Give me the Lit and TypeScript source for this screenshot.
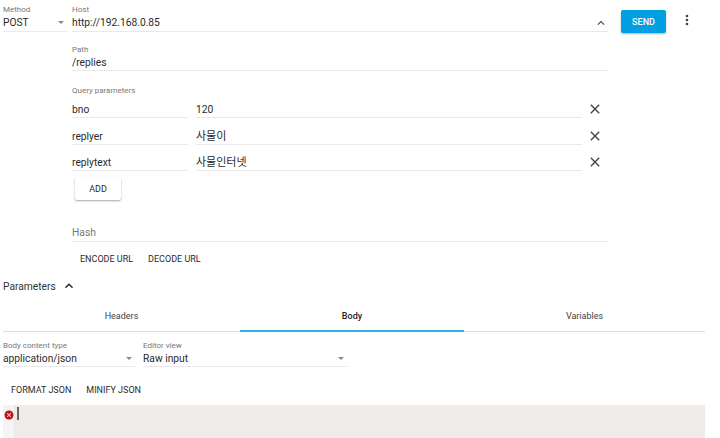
import { LitElement, html, css, svg } from "lit";
import { customElement } from "lit/decorators.js";

const chevUp = svg`<path d="M7.4 15.4 12 10.8l4.6 4.6L18 14l-6-6-6 6z"/>`;
const closeX = svg`<path d="M19 6.41 17.59 5 12 10.59 6.41 5 5 6.41 10.59 12 5 17.59 6.41 19 12 13.41 17.59 19 19 17.59 13.41 12z"/>`;
const dots = svg`<path d="M12 8a2 2 0 1 0 0-4 2 2 0 0 0 0 4zm0 2a2 2 0 1 0 0 4 2 2 0 0 0 0-4zm0 6a2 2 0 1 0 0 4 2 2 0 0 0 0-4z"/>`;

@customElement("app-root")
export class AppRoot extends LitElement {
  static styles = css`
    :host {
      display: block;
      width: 720px;
      height: 438px;
      overflow: hidden;
      background: #fff;
      color: #2b2b2b;
      font-family: Roboto, "Noto Sans CJK KR", sans-serif;
      font-size: 10.25px;
    }
    .top { display: flex; align-items: flex-start; padding-left: 3px; height: 35px; }
    .field { display: flex; flex-direction: column; border-bottom: 1px solid #e9e9e9; box-sizing: border-box; }
    .lab { font-size: 8px; line-height: 11px; color: #777; }
    .val { font-size: 10.25px; line-height: 15px; color: #2b2b2b; display: flex; align-items: center; justify-content: space-between; }
    .method { width: 64px; height: 32px; padding-top: 4px; margin-right: 5px; }
    .host { width: 536px; height: 32px; padding-top: 4px; margin-right: 13px; }
    .arrow { width: 0; height: 0; border-left: 3.5px solid transparent; border-right: 3.5px solid transparent; border-top: 3.5px solid #8a8a8a; margin-right: 3px; }
    .icon { fill: #37474f; display: block; flex: none; }
    .send {
      width: 45px; height: 23px; margin-top: 10px; background: #00a0e3; color: #fff; font-weight: 500;
      font-size: 9px; display: flex; align-items: center; justify-content: center; border-radius: 2px;
      box-shadow: 0 1px 2px rgba(0,0,0,.3);
    }
    .menu { margin: 12px 0 0 13px; fill: #424242; }
    .form { margin-left: 72px; width: 536px; display: flex; flex-direction: column; }
    .path { height: 35px; padding-top: 8px; margin-top: 1px; }
    .qlabel { margin-top: 14px; }
    .rows { margin-top: 2px; display: flex; flex-direction: column; gap: 6.5px; }
    .row { display: flex; align-items: flex-end; width: 536px; height: 20px; }
    .cell { height: 100%; display: flex; align-items: flex-end; border-bottom: 1px solid #e9e9e9; box-sizing: border-box; font-size: 10.25px; line-height: 15px; }
    .ko { font-size: 11px; }
    .k { width: 116px; margin-right: 8px; }
    .v { width: 386px; }
    .rm { margin: 0 0 1px 5px; fill: #424242; }
    .add {
      width: 46px; height: 23px; margin: 6px 0 0 3px; display: flex; align-items: center; justify-content: center;
      font-size: 9px; font-weight: 400; border-radius: 2px; box-shadow: 0 1px 2px rgba(0,0,0,.35);
    }
    .hash { height: 21px; box-sizing: border-box; padding-top: 3px; margin-top: 21px; font-size: 10.25px; color: #777; border-bottom: 1px solid #e9e9e9; line-height: 18px; }
    .links { display: flex; margin-top: 8px; padding-left: 8px; gap: 15px; height: 17px; align-items: center; }
    .btn { font-size: 9px; font-weight: 400; color: #2b2b2b; }
    .params { display: flex; align-items: center; margin: 11px 0 0 3px; height: 16px; font-size: 10.25px; color: #333; gap: 5px; }
    .tabs { display: grid; grid-template-columns: 237px 224px 241px; margin: 14px 0 0 3px; width: 702px; border-bottom: 1px solid #ddd; height: 23px; font-size: 9px; color: #444; text-align: center; }
    .tab { line-height: 17px; font-weight: 400; }
    .tab.on { color: #212121; font-weight: 500; border-bottom: 2px solid #2eaee3; height: 22px; }
    .body { display: flex; margin: 8px 0 0 3px; gap: 8px; }
    .b1 { width: 132px; height: 27px; }
    .b2 { width: 204px; height: 27px; }
    .fmt { display: flex; margin-top: 14px; padding-left: 11px; gap: 15px; height: 17px; align-items: center; }
    .editor { display: flex; margin: 7px 0 0 3px; width: 702px; height: 33px; background: #eeebe8; }
    .gutter { width: 11px; background: #f4f4f4; border-right: 1px solid #e6e6e6; position: relative; }
    .err { position: absolute; left: 1px; top: 5px; }
    .cursor { width: 1.5px; height: 13px; background: #666; margin: 2px 0 0 2px; }
  `;

  private kv(k: string, v: unknown) {
    return html`<div class="row">
      <div class="cell k">${k}</div>
      <div class="cell v">${v}</div>
      <svg class="rm" width="16" height="16" viewBox="0 0 24 24">${closeX}</svg>
    </div>`;
  }

  render() {
    return html`
      <div class="top">
        <div class="field method">
          <span class="lab">Method</span>
          <div class="val">POST<span class="arrow"></span></div>
        </div>
        <div class="field host">
          <span class="lab">Host</span>
          <div class="val">http://192.168.0.85
            <svg class="icon" width="14" height="14" viewBox="0 0 24 24">${chevUp}</svg>
          </div>
        </div>
        <div class="send">SEND</div>
        <svg class="menu" width="16" height="16" viewBox="0 0 24 24">${dots}</svg>
      </div>
      <div class="form">
        <div class="field path">
          <span class="lab">Path</span>
          <div class="val">/replies</div>
        </div>
        <span class="lab qlabel">Query parameters</span>
        <div class="rows">
          ${this.kv("bno", "120")}
          ${this.kv("replyer", html`<span class="ko">사물이</span>`)}
          ${this.kv("replytext", html`<span class="ko">사물인터넷</span>`)}
        </div>
        <div class="add">ADD</div>
        <div class="hash">Hash</div>
        <div class="links"><span class="btn">ENCODE URL</span><span class="btn">DECODE URL</span></div>
      </div>
      <div class="params">Parameters
        <svg width="16" height="16" viewBox="0 0 24 24" fill="#212121">${chevUp}</svg>
      </div>
      <div class="tabs">
        <div class="tab">Headers</div>
        <div class="tab on">Body</div>
        <div class="tab">Variables</div>
      </div>
      <div class="body">
        <div class="field b1"><span class="lab">Body content type</span><div class="val">application/json<span class="arrow"></span></div></div>
        <div class="field b2"><span class="lab">Editor view</span><div class="val">Raw input<span class="arrow"></span></div></div>
      </div>
      <div class="fmt"><span class="btn">FORMAT JSON</span><span class="btn">MINIFY JSON</span></div>
      <div class="editor">
        <div class="gutter">
          <svg class="err" width="10" height="10" viewBox="0 0 10 10">
            <circle cx="5" cy="5" r="4.5" fill="#c00d12"/>
            <path d="M3.2 3.2 6.8 6.8M6.8 3.2 3.2 6.8" stroke="#f4c4c4" stroke-width="1.1"/>
          </svg>
        </div>
        <div class="cursor"></div>
      </div>
    `;
  }
}
